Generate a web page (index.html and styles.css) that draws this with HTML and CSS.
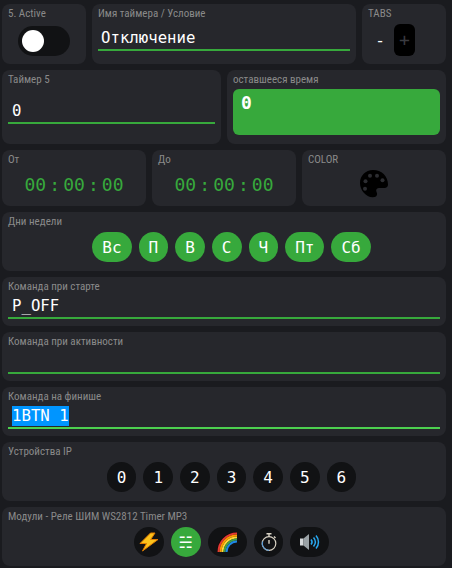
FILE: index.html
```html
<!DOCTYPE html>
<html lang="en">
<head>
<meta charset="UTF-8" />
<meta name="viewport" content="width=device-width, initial-scale=1.0" />
<title>Таймер 5</title>
<link rel="stylesheet" href="styles.css">
</head>
<body>
<div class="page">

<div class="row">
<section class="card card-side">
<h3>5. Active</h3>
<div class="switch"><span class="knob"></span></div>
</section>
<section class="card card-grow">
<h3>Имя таймера / Условие</h3>
<div class="field field-name">Отключение</div>
</section>
<section class="card card-side">
<h3>TABS</h3>
<div class="tabs">
<span class="tab-minus">-</span>
<span class="tab-plus">+</span>
</div>
</section>
</div>

<div class="row row-timer">
<section class="card card-half">
<h3>Таймер 5</h3>
<div class="field field-timer">0</div>
</section>
<section class="card card-half">
<h3>оставшееся время</h3>
<div class="remain">0</div>
</section>
</div>

<div class="row row-time">
<section class="card card-third">
<h3>От</h3>
<div class="clock"><span>00</span><i>:</i><span>00</span><i>:</i><span>00</span></div>
</section>
<section class="card card-third">
<h3>До</h3>
<div class="clock"><span>00</span><i>:</i><span>00</span><i>:</i><span>00</span></div>
</section>
<section class="card card-third">
<h3>COLOR</h3>
<div class="palette">
<svg width="30" height="29" viewBox="0 0 30 29">
<path fill="#000" d="M14 1C6.500 1 1 6.600 1 14c0 7.500 6 14 12.500 14.300 3 .1 4.600-1.300 4.600-3.300 0-1.500-.9-2.300-.9-3.500 0-1.400 1.100-2.500 2.800-2.500h5.500c2.200 0 3.500-1.300 3.500-3.500C29 7 22.500 1 14 1z"/>
<g fill="#2c2d31">
<circle cx="6.500" cy="12.300" r="2"/>
<circle cx="11" cy="6.800" r="2"/>
<circle cx="18" cy="6.800" r="2"/>
<circle cx="23.500" cy="11.300" r="2"/>
<circle cx="6" cy="19.800" r="2"/>
</g>
</svg>
</div>
</section>
</div>

<section class="card card-days">
<h3>Дни недели</h3>
<div class="buttons">
<span class="btn btn-on">Вс</span>
<span class="btn btn-on">П</span>
<span class="btn btn-on">В</span>
<span class="btn btn-on">С</span>
<span class="btn btn-on">Ч</span>
<span class="btn btn-on">Пт</span>
<span class="btn btn-on">Сб</span>
</div>
</section>

<section class="card card-cmd">
<h3>Команда при старте</h3>
<div class="field">P_OFF</div>
</section>
<section class="card card-cmd">
<h3>Команда при активности</h3>
<div class="field"></div>
</section>
<section class="card card-cmd">
<h3>Команда на финише</h3>
<div class="field field-focus"><span class="selected">1BTN 1</span></div>
</section>

<section class="card card-days">
<h3>Устройства IP</h3>
<div class="buttons">
<span class="btn">0</span>
<span class="btn">1</span>
<span class="btn">2</span>
<span class="btn">3</span>
<span class="btn">4</span>
<span class="btn">5</span>
<span class="btn">6</span>
</div>
</section>

<section class="card card-days">
<h3>Модули - Реле ШИМ WS2812 Timer MP3</h3>
<div class="buttons">
<span class="btn">
<svg width="20" height="20" viewBox="0 0 20 20"><path fill="#fcc21b" stroke="#e07b00" stroke-width="1" d="M11.500 1 1 11.500h6.500L3.500 19 19 7.500h-7.300l4.300-6.500z"/></svg>
</span>
<span class="btn btn-on btn-lines">☵</span>
<span class="btn btn-wide">
<svg width="20" height="20" viewBox="0 0 26 26">
<path fill="#1a0808" d="M0 26C0 11 11 0 26 0v14c-7 0-12 5-12.500 12z"/>
<path fill="none" stroke="#e53935" stroke-width="2.600" d="M2 26C2 12.500 12.500 2 26 2"/>
<path fill="none" stroke="#ff9800" stroke-width="2.600" d="M4.600 26C4.600 14 14 4.600 26 4.600"/>
<path fill="none" stroke="#fdd835" stroke-width="2.600" d="M7.200 26C7.200 15.500 15.500 7.200 26 7.200"/>
<path fill="none" stroke="#43a047" stroke-width="2.600" d="M9.800 26C9.800 17 17 9.800 26 9.800"/>
<path fill="none" stroke="#1e88e5" stroke-width="2.600" d="M12.400 26C12.400 18.500 18.500 12.400 26 12.400"/>
</svg>
</span>
<span class="btn">
<svg width="18" height="20" viewBox="0 0 18 20" fill="none">
<circle cx="9" cy="11.500" r="6.800" stroke="#d8d2c4" stroke-width="1.200"/>
<path stroke="#5b9bd5" stroke-width="1.200" d="M2.600 9.500A6.800 6.800 0 0 0 9 18.300"/>
<path stroke="#d8d2c4" stroke-width="1.400" d="M6.500 1.800h5M9 2v3M14 4.500l1.500 1.500M9 8v3.800"/>
</svg>
</span>
<span class="btn btn-wide">
<svg width="20" height="18" viewBox="0 0 20 18" fill="none">
<path fill="#d4d8da" d="M0 5.500h3.500V12.500H0z"/>
<path fill="#9aa2a6" d="M3.500 5.500 9 1v16l-5.500-4.500z"/>
<path stroke="#29a8f0" stroke-width="1.500" d="M11 6.500c1.300 1.500 1.300 3.500 0 5M13.500 4.500c2.300 2.700 2.300 6.300 0 9M16 2.500c3.300 3.800 3.300 9.200 0 13"/>
</svg>
</span>
</div>
</section>

</div>
</body>
</html>
```

FILE: styles.css
```css
* {
margin: 0;
padding: 0;
box-sizing: border-box;
}
body {
background: #1a1b1f;
font-family: "DejaVu Sans Mono", monospace;
color: #fff;
}
.page {
display: flex;
flex-direction: column;
gap: 6px;
width: 444px;
margin: 4px 0 0 2px;
}
.row {
display: flex;
gap: 6px;
}
.card {
background: #26272c;
border-radius: 8px;
padding: 2px 6px 0;
}
.card h3 {
font-family: Roboto, sans-serif;
font-size: 11px;
font-stretch: condensed;
font-weight: 400;
line-height: 15px;
color: #8a8a8a;
}
.card-side {
width: 84px;
height: 60px;
}
.card-grow {
flex: 1;
height: 60px;
}
.card-half {
flex: 1;
height: 74px;
}
.card-third {
flex: 1;
height: 56px;
}
.card-days {
height: 59px;
}
.card-cmd {
height: 49px;
}

.field {
display: flex;
align-items: flex-end;
height: 25px;
border-bottom: 2px solid #37a93c;
padding: 0 4px 1px;
font-size: 15.7px;
line-height: 20px;
white-space: pre;
}
.field-name {
height: 30px;
padding-left: 3px;
}
.field-timer {
height: 37px;
}
.field-focus {
border-bottom-color: #4cd04f;
}
.selected {
background: #0095ff;
}

.switch {
width: 52px;
height: 30px;
margin: 5px 0 0 10px;
padding: 4px;
background: #111214;
border-radius: 15px;
}
.knob {
display: block;
width: 22px;
height: 22px;
background: #fff;
border-radius: 50%;
}

.tabs {
display: flex;
align-items: center;
margin-top: 3px;
padding-left: 6px;
gap: 8px;
font-size: 16px;
}
.tab-minus {
width: 12px;
text-align: center;
}
.tab-plus {
width: 21px;
height: 32px;
line-height: 32px;
text-align: center;
background: #000;
border-radius: 6px;
color: #3a3b40;
font-size: 18px;
}

.remain {
height: 46px;
margin-top: 2px;
padding: 2px 8px;
background: #37a93c;
border-radius: 6px;
font-size: 18px;
line-height: 24px;
font-weight: 700;
}

.clock {
display: flex;
justify-content: center;
margin-top: 6px;
font-size: 18px;
line-height: 24px;
color: #37a93c;
}
.clock i {
font-style: normal;
width: 17px;
text-align: center;
}
.palette {
display: flex;
justify-content: center;
margin-top: 2px;
}

.buttons {
display: flex;
justify-content: center;
gap: 7px;
margin-top: 3px;
padding-left: 15px;
}
.btn {
display: flex;
align-items: center;
justify-content: center;
height: 30px;
min-width: 29.6px;
padding: 0 10px;
background: #111214;
border-radius: 15px;
font-size: 16px;
}
.btn svg {
flex: none;
margin: 0 -5px;
}
.btn-on {
background: #37a93c;
}
.btn-lines {
font-size: 16px;
padding: 0;
width: 30px;
font-family: "DejaVu Sans", sans-serif;
}
.btn-wide {
width: 39px;
}
```
